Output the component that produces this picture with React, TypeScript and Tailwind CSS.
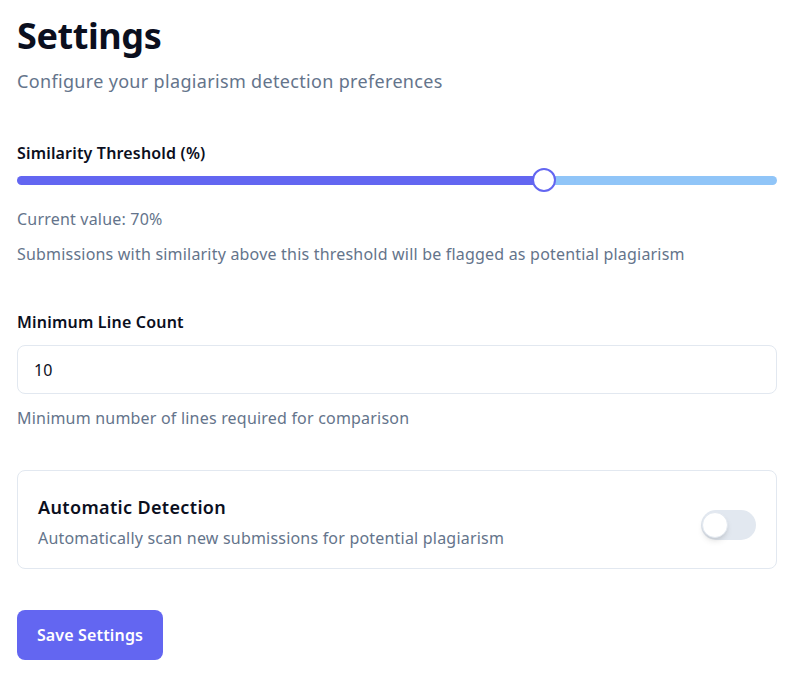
import React from "react";

export default function App() {
  return (
    <div
      className="min-h-screen bg-white pl-[17px] pr-[20px] pt-[12px]"
      style={{ fontFamily: '"Noto Sans", "Open Sans", sans-serif' }}
    >
      <h1 className="text-[36px] font-bold leading-[48px] tracking-[-0.4px] text-[#0b0f1e]">Settings</h1>
      <p className="mt-[9px] text-[18px] leading-[24px] tracking-[0.33px] text-[#64748b]">
        Configure your plagiarism detection preferences
      </p>

      <div className="mt-[48px]">
        <div className="text-[16px] font-semibold leading-[24px] tracking-[0.17px] text-[#0b0f1e]">Similarity Threshold (%)</div>
        <div className="relative mt-[4px] h-[22px] flex items-center">
          <div className="flex h-[9px] w-full overflow-hidden rounded-full">
            <div className="h-full bg-[#6366f1]" style={{ width: "69.3%" }} />
            <div className="h-full flex-1 bg-[#90c5f8]" />
          </div>
          <div
            className="absolute top-0 h-[24px] w-[24px] -translate-x-1/2 -translate-y-[1px] rounded-full border-2 border-[#6366f1] bg-white"
            style={{ left: "69.3%" }}
          />
        </div>
        <div className="mt-[16px] text-[16px] leading-[24px] tracking-[0.2px] text-[#64748b]">Current value: 70%</div>
        <div className="mt-[11px] text-[16px] leading-[24px] tracking-[0.2px] text-[#64748b]">
          Submissions with similarity above this threshold will be flagged as potential plagiarism
        </div>
      </div>

      <div className="mt-[44px]">
        <div className="text-[16px] font-semibold leading-[24px] tracking-[0.2px] text-[#0b0f1e]">Minimum Line Count</div>
        <div className="mt-[11px] flex h-[49px] items-center rounded-lg border border-[#e2e8f0] px-[16px] text-[16px] text-[#0b0f1e]">
          10
        </div>
        <div className="mt-[12px] text-[16px] leading-[24px] tracking-[0.2px] text-[#64748b]">
          Minimum number of lines required for comparison
        </div>
      </div>

      <div className="mt-[40px] flex h-[99px] items-center justify-between rounded-lg border border-[#e2e8f0] pl-[20px] pr-[20px]">
        <div className="pt-[4px]">
          <div className="text-[18px] font-semibold leading-[26px] tracking-[0.35px] text-[#0b0f1e]">Automatic Detection</div>
          <div className="mt-[6px] text-[16px] leading-[24px] tracking-[0.2px] text-[#64748b]">
            Automatically scan new submissions for potential plagiarism
          </div>
        </div>
        <div className="relative mt-[10px] h-[30px] w-[55px] rounded-full bg-[#e2e8f0]">
          <div className="absolute left-[1px] top-[2px] h-[26px] w-[26px] rounded-full border border-[#e2e8f0] bg-white shadow-md" />
        </div>
      </div>

      <button className="mt-[41px] h-[50px] w-[146px] rounded-lg bg-[#6366f1] text-[16px] font-semibold tracking-[0.15px] text-white">
        Save Settings
      </button>
    </div>
  );
}
